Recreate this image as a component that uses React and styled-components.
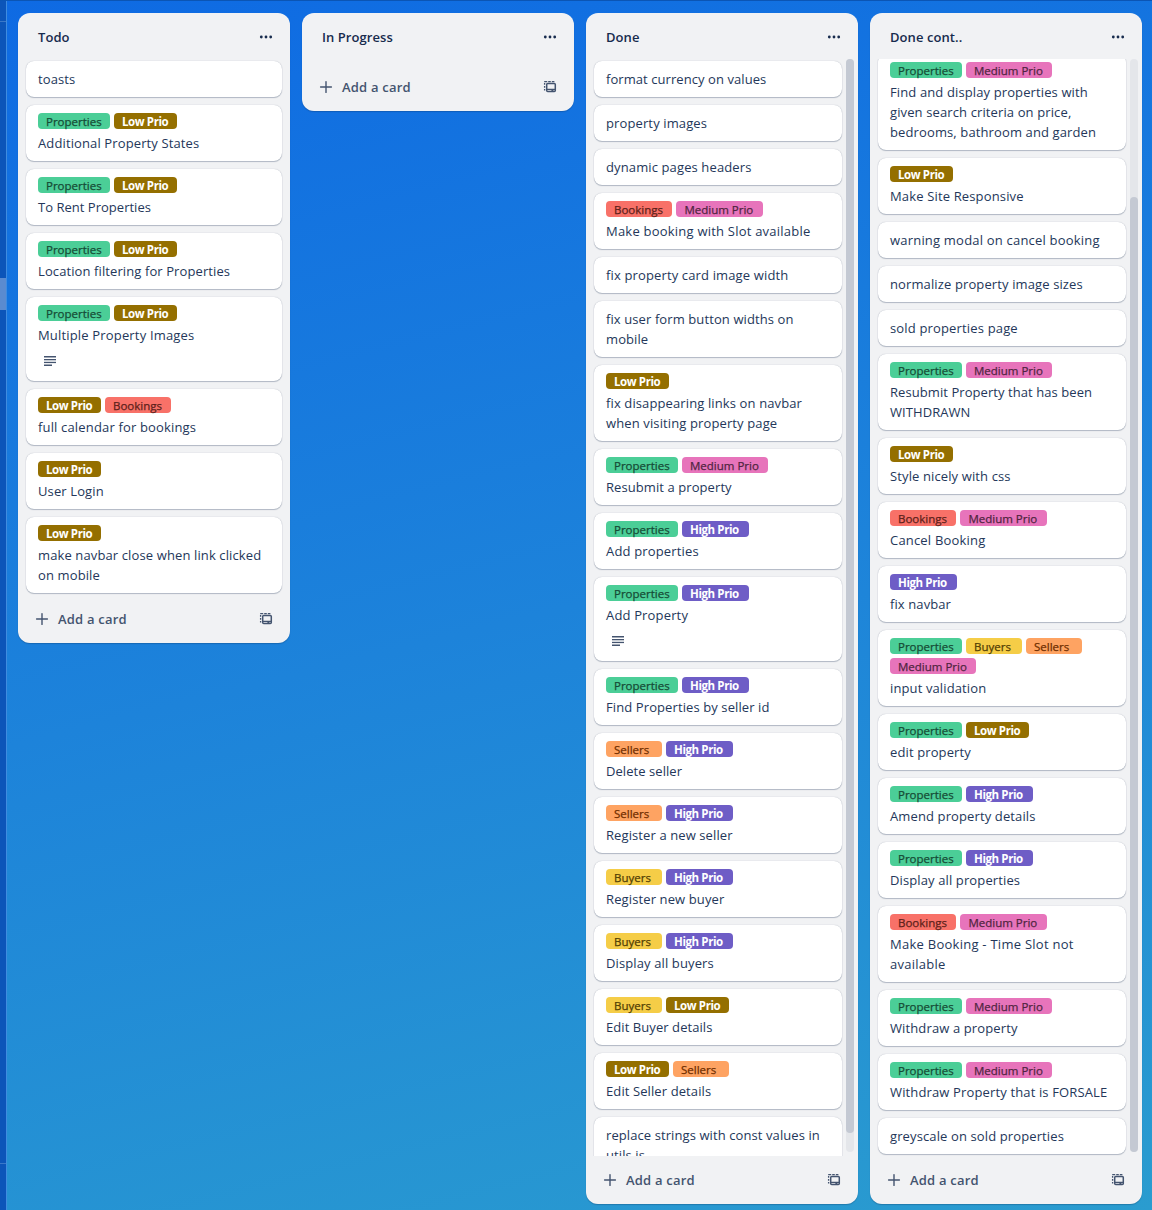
import React from "react";
import styled, { createGlobalStyle } from "styled-components";

const Global = createGlobalStyle`
  * { box-sizing: border-box; }
  html, body { margin: 0; padding: 0; }
  body {
    font-family: "Open Sans", "Noto Sans", "Liberation Sans", sans-serif;
    color: #172b4d;
    overflow: hidden;
  }
`;

const Page = styled.div`
  display: flex;
  width: 1152px;
  height: 1210px;
  overflow: hidden;
  border-top: 1px solid #0b55b4;
  background: linear-gradient(166deg, #0e6ae3 0%, #1d83da 50%, #2a9ccf 100%);
`;

const Sidebar = styled.aside`
  display: flex;
  flex-direction: column;
  justify-content: space-between;
  flex: none;
  width: 7px;
  padding: 20px 0 46px;
  background: #0c55b9;
  border-right: 1px solid #3f8ce0;
`;

const Rule = styled.div`
  height: 1px;
  background: #3b78c8;
`;

const ActiveItem = styled.div`
  height: 32px;
  margin: 256px 0 auto;
  background: #5a8bd0;
`;

const Board = styled.main`
  display: flex;
  align-items: flex-start;
  gap: 12px;
  padding: 12px 0 6px 11px;
`;

const Column = styled.section`
  display: flex;
  flex-direction: column;
  flex: none;
  width: 272px;
  max-height: 1191px;
  border-radius: 12px;
  background: #f1f2f4;
  box-shadow: 0 1px 1px rgba(9, 30, 66, 0.25);
`;

const Header = styled.header`
  display: flex;
  align-items: center;
  justify-content: space-between;
  flex: none;
  height: 46px;
  padding: 1px 17px 0 20px;
`;

const Title = styled.h2`
  margin: 0;
  font-size: 13px;
  font-weight: 600;
  line-height: 20px;
  letter-spacing: 0.07px;
`;

const Body = styled.div`
  display: flex;
  flex: 0 1 auto;
  min-height: 0;
  padding: 0 4px;
`;

const List = styled.div`
  display: flex;
  flex-direction: column;
  gap: 8px;
  flex: 1;
  min-width: 0;
  padding: 2px 4px;
  overflow: hidden;

  & > :first-child {
    margin-top: ${(p) => -p.$scrolled}px;
  }
`;

const Track = styled.div`
  flex: none;
  width: 8px;
  margin-bottom: 4px;
  padding-top: ${(p) => p.$offset}px;
  border-radius: 4px;
  background: #e4e6ea;
`;

const Thumb = styled.div`
  height: ${(p) => p.$size}px;
  border-radius: 4px;
  background: #c4c9d3;
`;

const CardBox = styled.article`
  flex: none;
  padding: 8px 12px;
  border-radius: 8px;
  background: #fff;
  box-shadow: 0 1px 1px rgba(9, 30, 66, 0.25), 0 0 1px rgba(9, 30, 66, 0.31);
`;

const Labels = styled.div`
  display: flex;
  flex-wrap: wrap;
  gap: 4px;
  margin-bottom: 4px;
`;

const Label = styled.span`
  width: ${(p) => p.$kind.width}px;
  height: 16px;
  padding: 0 8px;
  border-radius: 4px;
  background: ${(p) => p.$kind.bg};
  color: ${(p) => p.$kind.fg};
  font-size: 11.5px;
  font-weight: ${(p) => (p.$kind.bold ? 700 : 400)};
  -webkit-text-stroke: ${(p) => (p.$kind.bold ? 0 : 0.25)}px currentColor;
  line-height: 17px;
  letter-spacing: ${(p) => (p.$kind.bold ? -0.4 : 0)}px;
  white-space: nowrap;
`;

const CardText = styled.div`
  color: #24375a;
  font-size: 13px;
  line-height: 20px;
  white-space: pre;
  letter-spacing: ${(p) => p.$track}px;
`;

const Badges = styled.div`
  display: flex;
  height: 28px;
  padding: 10px 4px 6px;
`;

const Footer = styled.footer`
  display: flex;
  align-items: center;
  justify-content: space-between;
  flex: none;
  height: 48px;
  padding: 0 16px;
  color: #44546f;
`;

const AddButton = styled.div`
  display: flex;
  align-items: center;
  gap: 8px;
  font-size: 13px;
  font-weight: 600;
  line-height: 20px;
  letter-spacing: 0.2px;
`;

const Icon = styled.svg`
  display: block;
  flex: none;
`;

const DotsIcon = () => (
  <Icon width="14" height="4" viewBox="0 0 14 4" fill="#172b4d">
    <circle cx="2.3" cy="2" r="1.4" />
    <circle cx="7" cy="2" r="1.4" />
    <circle cx="11.7" cy="2" r="1.4" />
  </Icon>
);

const PlusIcon = () => (
  <Icon width="16" height="16" viewBox="0 0 16 16" stroke="#44546f" strokeWidth="1.4" strokeLinecap="round">
    <path d="M8 2.6v10.8M2.6 8h10.8" />
  </Icon>
);

const TemplateIcon = () => (
  <Icon width="16" height="16" viewBox="0 0 16 16" fill="none" stroke="#44546f">
    <path d="M2.6 11.4V10M2.6 8.8V7M2.6 5.8V4M2.2 2.7H5.2M6.2 2.7h2.6M9.8 2.7h2.6" strokeWidth="1.3" />
    <rect x="4.7" y="4.6" width="8.6" height="8" rx="1" strokeWidth="1.5" />
    <path d="M4.7 10.4h8.6" strokeWidth="1.3" />
    <path d="M9.4 11.5h2" strokeWidth="1.8" />
  </Icon>
);

const DescriptionIcon = () => (
  <Icon width="16" height="12" viewBox="0 0 16 12" fill="#44546f">
    <rect x="2" y="1" width="12" height="1.5" />
    <rect x="2" y="4" width="12" height="1.3" />
    <rect x="2" y="6.8" width="12" height="1.3" />
    <rect x="2" y="9.5" width="8" height="1.5" />
  </Icon>
);

const kinds = {
  P: { text: "Properties", bg: "#4bce97", fg: "#164b35", width: 72 },
  L: { text: "Low Prio", bg: "#946f00", fg: "#ffffff", width: 63, bold: true },
  B: { text: "Bookings", bg: "#f87168", fg: "#5d1f1a", width: 66.4 },
  M: { text: "Medium Prio", bg: "#e774bb", fg: "#50253f", width: 86.3 },
  H: { text: "High Prio", bg: "#6e5dc6", fg: "#ffffff", width: 67, bold: true },
  Y: { text: "Buyers", bg: "#f5cd47", fg: "#533f04", width: 56 },
  S: { text: "Sellers", bg: "#fea362", fg: "#702e00", width: 56 },
};

const columns = [
  {
    title: "Todo",
    cards: [
      { text: "toasts" },
      { labels: "PL", text: "Additional Property States" },
      { labels: "PL", text: "To Rent Properties", track: 0.02 },
      { labels: "PL", text: "Location filtering for Properties", track: 0.1 },
      { labels: "PL", text: "Multiple Property Images", track: 0.17, described: true },
      { labels: "LB", text: "full calendar for bookings", track: 0.16 },
      { labels: "L", text: "User Login" },
      { labels: "L", text: "make navbar close when link clicked\non mobile" },
    ],
  },
  { title: "In Progress", cards: [] },
  {
    title: "Done",
    scroll: { by: 0, offset: 0, size: 1074 },
    cards: [
      { text: "format currency on values", track: 0.07 },
      { text: "property images" },
      { text: "dynamic pages headers" },
      { labels: "BM", text: "Make booking with Slot available", track: 0.22 },
      { text: "fix property card image width", track: 0.14 },
      { text: "fix user form button widths on\nmobile", track: 0.1 },
      { labels: "L", text: "fix disappearing links on navbar\nwhen visiting property page" },
      { labels: "PM", text: "Resubmit a property", track: 0.08 },
      { labels: "PH", text: "Add properties", track: 0.16 },
      { labels: "PH", text: "Add Property", track: 0.16, described: true },
      { labels: "PH", text: "Find Properties by seller id", track: 0.1 },
      { labels: "SH", text: "Delete seller", track: 0.06 },
      { labels: "SH", text: "Register a new seller", track: 0.1 },
      { labels: "YH", text: "Register new buyer" },
      { labels: "YH", text: "Display all buyers" },
      { labels: "YL", text: "Edit Buyer details", track: 0.07 },
      { labels: "LS", text: "Edit Seller details", track: 0.1 },
      { text: "replace strings with const values in\nutils.js", track: 0.09 },
    ],
  },
  {
    title: "Done cont..",
    scroll: { by: 7, offset: 138, size: 955 },
    cards: [
      { labels: "PM", text: "Find and display properties with\ngiven search criteria on price,\nbedrooms, bathroom and garden" },
      { labels: "L", text: "Make Site Responsive", track: 0.15 },
      { text: "warning modal on cancel booking", track: 0.2 },
      { text: "normalize property image sizes" },
      { text: "sold properties page", track: 0.16 },
      { labels: "PM", text: "Resubmit Property that has been\nWITHDRAWN", track: 0.07 },
      { labels: "L", text: "Style nicely with css" },
      { labels: "BM", text: "Cancel Booking", track: 0.19 },
      { labels: "H", text: "fix navbar", track: 0.1 },
      { labels: "PYSM", text: "input validation" },
      { labels: "PL", text: "edit property" },
      { labels: "PH", text: "Amend property details" },
      { labels: "PH", text: "Display all properties" },
      { labels: "BM", text: "Make Booking - Time Slot not\navailable", track: 0.26 },
      { labels: "PM", text: "Withdraw a property" },
      { labels: "PM", text: "Withdraw Property that is FORSALE", track: 0.14 },
      { text: "greyscale on sold properties" },
    ],
  },
];

const Card = ({ labels, text, track = 0.12, described }) => (
  <CardBox>
    {labels && (
      <Labels>
        {[...labels].map((k) => (
          <Label key={k} $kind={kinds[k]}>{kinds[k].text}</Label>
        ))}
      </Labels>
    )}
    <CardText $track={track}>{text}</CardText>
    {described && (
      <Badges>
        <DescriptionIcon />
      </Badges>
    )}
  </CardBox>
);

export default function App() {
  return (
    <>
      <Global />
      <Page>
        <Sidebar>
          <Rule />
          <ActiveItem />
          <Rule />
        </Sidebar>
        <Board>
          {columns.map(({ title, cards, scroll }) => (
            <Column key={title}>
              <Header>
                <Title>{title}</Title>
                <DotsIcon />
              </Header>
              <Body>
                <List $scrolled={scroll ? scroll.by : 0}>
                  {cards.map((card) => (
                    <Card key={card.text} {...card} />
                  ))}
                </List>
                {scroll && (
                  <Track $offset={scroll.offset}>
                    <Thumb $size={scroll.size} />
                  </Track>
                )}
              </Body>
              <Footer>
                <AddButton>
                  <PlusIcon />
                  Add a card
                </AddButton>
                <TemplateIcon />
              </Footer>
            </Column>
          ))}
        </Board>
      </Page>
    </>
  );
}
